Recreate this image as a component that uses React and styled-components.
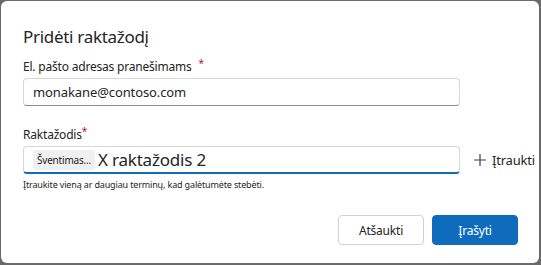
import React from "react";
import styled, { createGlobalStyle } from "styled-components";

const GlobalStyle = createGlobalStyle`
  html, body {
    margin: 0;
    padding: 0;
    background: #5f5f5f;
  }
  body {
    font-family: "Noto Sans", "Open Sans", sans-serif;
    color: #242424;
  }
`;

const Frame = styled.div`
  width: 541px;
  height: 265px;
  box-sizing: border-box;
  padding: 1px 2px 2px 1px;
  background: #6a6a6a;
`;

const Dialog = styled.div`
  height: 100%;
  box-sizing: border-box;
  background: #fff;
  border-radius: 6px;
  padding: 24px 21px 0 22px;
  display: flex;
  flex-direction: column;
`;

const Title = styled.h2`
  margin: 0;
  font-size: 17px;
  font-weight: 400;
  line-height: 24px;
  letter-spacing: -0.3px;
`;

const Label = styled.label`
  display: block;
  font-size: 12px;
  line-height: 16px;
  margin-top: ${(p) => p.$top}px;
  letter-spacing: -0.2px;
`;

const Star = styled.span`
  color: #c50f1f;
  font-size: 10px;
  vertical-align: top;
  margin-left: ${(p) => p.$gap}px;
  position: relative;
  top: -4px;
`;

const Row = styled.div`
  display: flex;
  align-items: center;
  margin-top: 3px;
`;

const Field = styled.div`
  flex: 0 0 437px;
  height: 28px;
  box-sizing: border-box;
  border: 1px solid #d6d6d6;
  border-bottom: ${(p) => (p.$focused ? "2px solid #0f6cbd" : "1px solid #8a8a8a")};
  border-radius: 4px;
  display: flex;
  align-items: center;
  padding: 0 9px;
  gap: 3px;
  font-size: 13px;
  letter-spacing: -0.1px;
`;

const Chip = styled.span`
  background: #f0f0f0;
  border-radius: 3px;
  font-size: 10px;
  line-height: 20px;
  padding: 0 4px;
  letter-spacing: -0.2px;
`;

const BigText = styled.span`
  font-size: 17px;
  letter-spacing: -0.2px;
`;

const AddButton = styled.button`
  margin-left: 13px;
  border: 0;
  background: none;
  padding: 0;
  font: inherit;
  font-size: 13px;
  color: #242424;
  display: flex;
  align-items: center;
  gap: 5px;
  white-space: nowrap;
  letter-spacing: -0.2px;
`;

const Hint = styled.div`
  font-size: 9px;
  line-height: 12px;
  margin-top: 5px;
  letter-spacing: -0.15px;
`;

const Actions = styled.div`
  display: flex;
  justify-content: flex-end;
  gap: 8px;
  margin-top: 24px;
`;

const Button = styled.button`
  width: 86px;
  height: 30px;
  box-sizing: border-box;
  border-radius: 4px;
  font: inherit;
  font-size: 12px;
  letter-spacing: -0.2px;
  border: 1px solid ${(p) => (p.$primary ? "#0f6cbd" : "#d1d1d1")};
  background: ${(p) => (p.$primary ? "#0f6cbd" : "#fff")};
  color: ${(p) => (p.$primary ? "#fff" : "#242424")};
`;

const Plus = () => (
  <svg width="14" height="14" viewBox="0 0 14 14">
    <path d="M7 1v12M1 7h12" stroke="#424242" strokeWidth="1.2" fill="none" />
  </svg>
);

export default function App() {
  return (
    <>
      <GlobalStyle />
      <Frame>
        <Dialog>
          <Title>Pridėti raktažodį</Title>
          <Label $top={10}>
            El. pašto adresas pranešimams<Star $gap={7}>*</Star>
          </Label>
          <Row>
            <Field>monakane@contoso.com</Field>
          </Row>
          <Label $top={21}>
            Raktažodis<Star $gap={0}>*</Star>
          </Label>
          <Row>
            <Field $focused>
              <Chip>Šventimas...</Chip>
              <BigText>X raktažodis 2</BigText>
            </Field>
            <AddButton>
              <Plus />
              Įtraukti
            </AddButton>
          </Row>
          <Hint>Įtraukite vieną ar daugiau terminų, kad galėtumėte stebėti.</Hint>
          <Actions>
            <Button>Atšaukti</Button>
            <Button $primary>Įrašyti</Button>
          </Actions>
        </Dialog>
      </Frame>
    </>
  );
}
